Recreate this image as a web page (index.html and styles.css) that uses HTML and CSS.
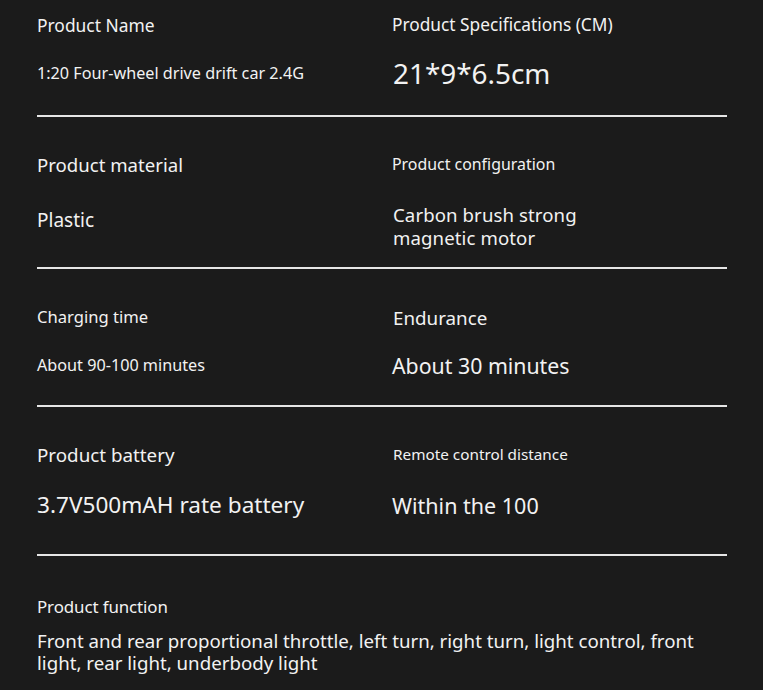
FILE: index.html
```html
<!DOCTYPE html>
<html>
<head>
<meta charset="utf-8">
<link rel="stylesheet" href="styles.css">
</head>
<body>
<div class="sheet">
  <section class="row r1">
    <div class="cell">
      <div class="label l1">Product Name</div>
      <div class="value v1">1:20 Four-wheel drive drift car 2.4G</div>
    </div>
    <div class="cell">
      <div class="label l1r">Product Specifications (CM)</div>
      <div class="value v1r">21*9*6.5cm</div>
    </div>
  </section>
  <section class="row r2">
    <div class="cell">
      <div class="label l2">Product material</div>
      <div class="value v2">Plastic</div>
    </div>
    <div class="cell">
      <div class="label l2r">Product configuration</div>
      <div class="value v2r">Carbon brush strong<br>magnetic motor</div>
    </div>
  </section>
  <section class="row r3">
    <div class="cell">
      <div class="label l3">Charging time</div>
      <div class="value v3">About 90-100 minutes</div>
    </div>
    <div class="cell">
      <div class="label l3r">Endurance</div>
      <div class="value v3r">About 30 minutes</div>
    </div>
  </section>
  <section class="row r4">
    <div class="cell">
      <div class="label l4">Product battery</div>
      <div class="value v4">3.7V500mAH rate battery</div>
    </div>
    <div class="cell">
      <div class="label l4r">Remote control distance</div>
      <div class="value v4r">Within the 100</div>
    </div>
  </section>
  <section class="func">
    <div class="label l5">Product function</div>
    <div class="value v5">Front and rear proportional throttle, left turn, right turn, light control, front light, rear light, underbody light</div>
  </section>
</div>
</body>
</html>
```

FILE: styles.css
```css
html, body {
  margin: 0;
  padding: 0;
  background: #1b1b1b;
}
body {
  width: 763px;
  height: 690px;
  overflow: hidden;
  font-family: "Noto Sans", "Open Sans", sans-serif;
  color: #f2f2f2;
}
.sheet {
  padding-left: 37px;
  width: 690px;
}
.row {
  display: grid;
  grid-template-columns: 355px 1fr;
  border-bottom: 2px solid #e6e6e6;
  box-sizing: border-box;
}
.cell {
  display: flex;
  flex-direction: column;
}
.label, .value { white-space: nowrap; }

.r1 { height: 117px; }
.l1 { font-size: 17.4px; line-height: 20px; padding-top: 15px; }
.v1 { font-size: 16.2px; line-height: 20px; margin-top: 28px; }
.l1r { font-size: 17.3px; line-height: 20px; padding-top: 15px; }
.v1r { font-size: 27.9px; line-height: 34px; margin-top: 21px; padding-left: 1px; }

.r2 { height: 152px; }
.l2 { font-size: 18.6px; line-height: 24px; padding-top: 36px; }
.v2 { font-size: 19px; line-height: 24px; margin-top: 31px; }
.l2r { font-size: 15.9px; line-height: 20px; padding-top: 37px; }
.v2r { font-size: 18.6px; line-height: 23px; margin-top: 29px; padding-left: 1px; }
.v2r { letter-spacing: 0.1px; }

.r3 { height: 138px; }
.l3 { font-size: 16.6px; line-height: 20px; padding-top: 38px; }
.v3 { font-size: 16.2px; line-height: 20px; margin-top: 28px; }
.l3r { font-size: 18.8px; line-height: 24px; padding-top: 37px; padding-left: 1px; }
.v3r { font-size: 21.3px; line-height: 26px; margin-top: 23px; }

.r4 { height: 149px; }
.l4 { font-size: 18.8px; line-height: 24px; padding-top: 36px; }
.v4 { font-size: 22.6px; line-height: 28px; margin-top: 24px; }
.l4r { font-size: 15.3px; line-height: 20px; padding-top: 37px; padding-left: 1px; }
.v4r { font-size: 21.5px; line-height: 26px; margin-top: 29px; }

.func { display: flex; flex-direction: column; }
.l5 { font-size: 16.9px; line-height: 20px; padding-top: 41px; letter-spacing: -0.1px; }
.v5 { font-size: 18.7px; line-height: 22px; margin-top: 13px; white-space: normal; width: 690px; }
```
